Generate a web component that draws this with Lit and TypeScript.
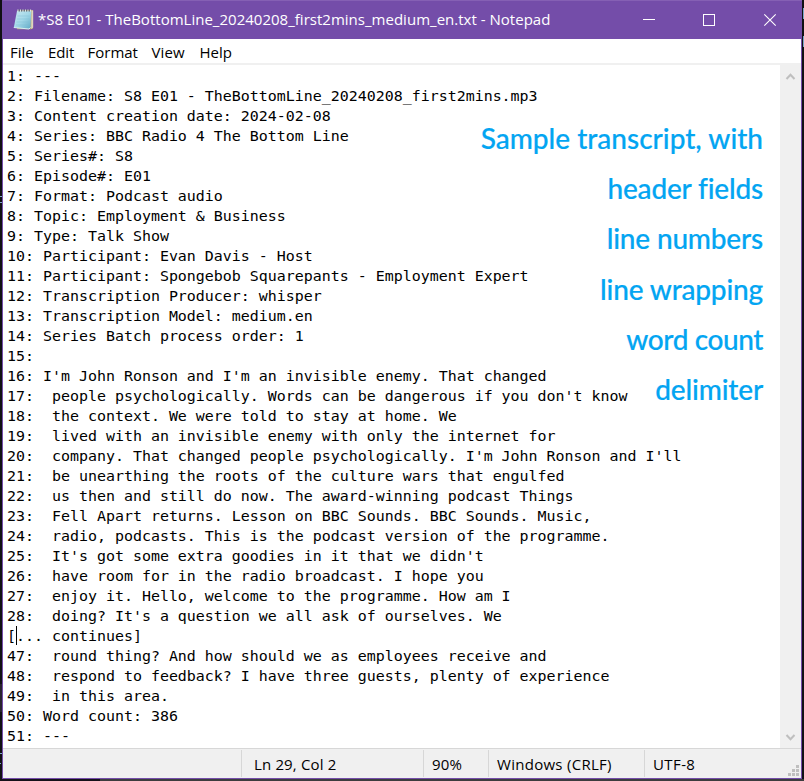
import { LitElement, html, svg, css } from "lit";
import { customElement } from "lit/decorators.js";

const LINES: string[] = [
  "1: ---",
  "2: Filename: S8 E01 - TheBottomLine_20240208_first2mins.mp3",
  "3: Content creation date: 2024-02-08",
  "4: Series: BBC Radio 4 The Bottom Line",
  "5: Series#: S8",
  "6: Episode#: E01",
  "7: Format: Podcast audio",
  "8: Topic: Employment & Business",
  "9: Type: Talk Show",
  "10: Participant: Evan Davis - Host",
  "11: Participant: Spongebob Squarepants - Employment Expert",
  "12: Transcription Producer: whisper",
  "13: Transcription Model: medium.en",
  "14: Series Batch process order: 1",
  "15:",
  "16: I'm John Ronson and I'm an invisible enemy. That changed",
  "17:  people psychologically. Words can be dangerous if you don't know",
  "18:  the context. We were told to stay at home. We",
  "19:  lived with an invisible enemy with only the internet for",
  "20:  company. That changed people psychologically. I'm John Ronson and I'll",
  "21:  be unearthing the roots of the culture wars that engulfed",
  "22:  us then and still do now. The award-winning podcast Things",
  "23:  Fell Apart returns. Lesson on BBC Sounds. BBC Sounds. Music,",
  "24:  radio, podcasts. This is the podcast version of the programme.",
  "25:  It's got some extra goodies in it that we didn't",
  "26:  have room for in the radio broadcast. I hope you",
  "27:  enjoy it. Hello, welcome to the programme. How am I",
  "28:  doing? It's a question we all ask of ourselves. We",
  "[... continues]",
  "47:  round thing? And how should we as employees receive and",
  "48:  respond to feedback? I have three guests, plenty of experience",
  "49:  in this area.",
  "50: Word count: 386",
  "51: ---",
];

const NOTES = ["Sample transcript, with", "header fields", "line numbers", "line wrapping", "word count", "delimiter"];

@customElement("title-bar")
class TitleBar extends LitElement {
  static styles = css`
    :host { display: flex; height: 39px; background: #744da9; box-shadow: inset 0 1px #8560b4; color: #fff; margin-right: -1px; }
    .icon { flex: none; margin: 8px 3px 0 10px; width: 22px; height: 24px; }
    .title { flex: 1; font: 15px/39px "Open Sans", sans-serif; letter-spacing: 0.016px; white-space: pre; height: 39px; }
    .btn { flex: none; width: 61px; height: 39px; }
    .btn.close { width: 61px; }
  `;
  render() {
    return html`
      <svg class="icon" viewBox="0 0 22 24">
        <defs><linearGradient id="g" x1="0" y1="0" x2="1" y2="1"><stop offset="0" stop-color="#c9e9f1"/><stop offset=".5" stop-color="#a3d8e8"/><stop offset="1" stop-color="#5fa9c5"/></linearGradient></defs>
        <path d="M5 2.500 20 2v18.500l-2 .8H4z" fill="#b3a27c"/>
        <path d="M18.500 2.500h1.700v17l-2 1.500z" fill="#ddd6bd"/>
        <path d="M4 3h14.200l-.7 16.500L16 21 .8 19.500z" fill="url(#g)"/>
        <path d="M.8 19.500 16 21l1.500-1.500" stroke="#d6eef3" fill="none"/>
        <path d="M4.500 8h12M4 11h12.500M3.500 14h12.500M3 17h12.500" stroke="#7fbfd6" stroke-width=".7" opacity=".6"/>
        <path d="M5 1.500v2M7.500 1.500v2M10 1.500v2M12.500 1.500v2M15 1.500v2M17.500 1.500v2" stroke="#dfe3da" stroke-width="1.200"/>
        <path d="M6.200 1.500v2.200M8.700 1.500v2.200M11.200 1.500v2.200M13.700 1.500v2.200M16.200 1.500v2.200" stroke="#53616d" stroke-width=".9"/>
      </svg>
      <span class="title">*S8 E01 - TheBottomLine_20240208_first2mins_medium_en.txt - Notepad</span>
      <svg class="btn" viewBox="0 0 61 39"><path d="M24 19.500h12" stroke="#fff"/></svg>
      <svg class="btn" viewBox="0 0 61 39"><rect x="23.500" y="14.500" width="11" height="11" fill="none" stroke="#fff"/></svg>
      <svg class="btn close" viewBox="0 0 61 39"><path d="M23.300 14.300 34.700 25.700M34.700 14.300 23.300 25.700" stroke="#fff" stroke-width="1.100"/></svg>
    `;
  }
}

@customElement("menu-bar")
class MenuBar extends LitElement {
  static styles = css`
    :host { display: flex; height: 24px; background: #fff; border-bottom: 2px solid #f0f0f0; padding-left: 7px; color: #000;
      font: 15px/27px "Open Sans", sans-serif; }
    .item { white-space: nowrap; }
    .file { width: 38px; letter-spacing: 0; }
    .edit { width: 39.500px; letter-spacing: -0.1px; }
    .format { width: 64px; letter-spacing: 0; }
    .view { width: 48px; letter-spacing: 0.1px; }
    .help { letter-spacing: 0; }
  `;
  render() {
    return html`${["File", "Edit", "Format", "View", "Help"].map((t) => html`<span class="item ${t.toLowerCase()}">${t}</span>`)}`;
  }
}

@customElement("text-editor")
class TextEditor extends LitElement {
  static styles = css`
    :host { display: flex; height: 683px; background: #fff; position: relative; }
    .text { flex: 1; padding: 1px 0 0 4px; color: #000; overflow: hidden;
      font: 14.950px/20px "DejaVu Sans Mono", monospace; white-space: pre; }
    .line { height: 20px; position: relative; }
    .caret { position: absolute; left: 9px; top: 0; width: 1px; height: 19px; background: #000; }
    .scroll { flex: none; width: 21px; background: #f0f0f0; display: flex; flex-direction: column; justify-content: space-between; }
    .arrow { display: block; width: 21px; height: 21px; }
    .notes { position: absolute; top: 48px; right: 38px; color: #03a5f2; text-align: right; white-space: nowrap;
      font: 500 28px/50.200px Lato, sans-serif; -webkit-text-stroke: 0.2px #03a5f2; }
    .n1, .n2, .n3 { letter-spacing: -0.180px; }
    .n4 { letter-spacing: -0.400px; }
    .n5 { letter-spacing: -0.150px; }
  `;
  render() {
    const arrow = (d: string) => html`<svg class="arrow" viewBox="0 0 21 21">${svg`<path d=${d} fill="none" stroke="#bfbfbf" stroke-width="2"/>`}</svg>`;
    return html`
      <div class="text">${LINES.map((l) => html`<div class="line">${l}${l.startsWith("[") ? html`<span class="caret"></span>` : ""}</div>`)}</div>
      <div class="scroll">${arrow("M6.500 14 10.500 9.700 14.500 14")}${arrow("M6.500 8 10.500 12.300 14.500 8")}</div>
      <div class="notes">${NOTES.map((n, i) => html`<div class="n${i}">${n}</div>`)}</div>
    `;
  }
}

@customElement("status-bar")
class StatusBar extends LitElement {
  static styles = css`
    :host { display: flex; box-sizing: border-box; height: 30px; border-top: 1px solid #d7d7d7; background: #f0f0f0; color: #000;
      padding-top: 1px; font: 15px/29px "Open Sans", sans-serif; }
    .cell { box-sizing: border-box; height: 27px; border-left: 1px solid #d7d7d7; white-space: nowrap; }
    .blank { width: 238px; }
    .pos { width: 182px; padding-left: 12px; letter-spacing: 0.150px; }
    .zoom { width: 65px; padding-left: 8px; letter-spacing: 0.200px; }
    .eol { width: 156px; padding-left: 8px; letter-spacing: 0.280px; }
    .enc { flex: 1; padding-left: 8px; letter-spacing: 0.400px; }
    .grip { align-self: flex-end; width: 11px; height: 11px; margin: 0 2px 2px 0; }
  `;
  render() {
    return html`
      <div class="blank"></div>
      <div class="cell pos">Ln 29, Col 2</div>
      <div class="cell zoom">90%</div>
      <div class="cell eol">Windows (CRLF)</div>
      <div class="cell enc">UTF-8</div>
      <svg class="grip" viewBox="0 0 11 11"><path fill="#bfbfbf" d="M8 0h3v3h-3zM4 4h3v3h-3zM8 4h3v3h-3zM0 8h3v3h-3zM4 8h3v3h-3zM8 8h3v3h-3z"/></svg>
    `;
  }
}

@customElement("app-root")
class AppRoot extends LitElement {
  static styles = css`
    :host { display: block; position: relative; box-sizing: border-box; width: 804px; height: 781px; padding-left: 2px; overflow: hidden;
      background: linear-gradient(90deg, #15111a 100px, #3c3c3e 100px) 0 779px / 100% 2px no-repeat, #111014; }
    .window { box-sizing: border-box; width: 800px; height: 779px; border: solid #744da9; border-width: 0 1px 1px 1px; }
    .edge { position: absolute; background: #7ea6c8; width: 1px; }
    .e1 { left: 803px; top: 8px; height: 11px; }
    .e2 { left: 803px; top: 36px; height: 11px; }
    .e3 { left: 0; top: 196px; width: 2px; height: 1px; }
    .e4 { left: 0; top: 202px; width: 2px; height: 1px; }
    .e5 { left: 0; top: 753px; width: 2px; height: 1px; }
    .e6 { left: 0; top: 763px; width: 1px; height: 1px; }
    .e7 { left: 0; top: 684px; width: 2px; height: 28px; background: #29232f; }
  `;
  render() {
    return html`
      <div class="window">
        <title-bar></title-bar>
        <menu-bar></menu-bar>
        <text-editor></text-editor>
        <status-bar></status-bar>
      </div>
      ${[1, 2, 3, 4, 5, 6, 7].map((n) => html`<div class="edge e${n}"></div>`)}
    `;
  }
}
